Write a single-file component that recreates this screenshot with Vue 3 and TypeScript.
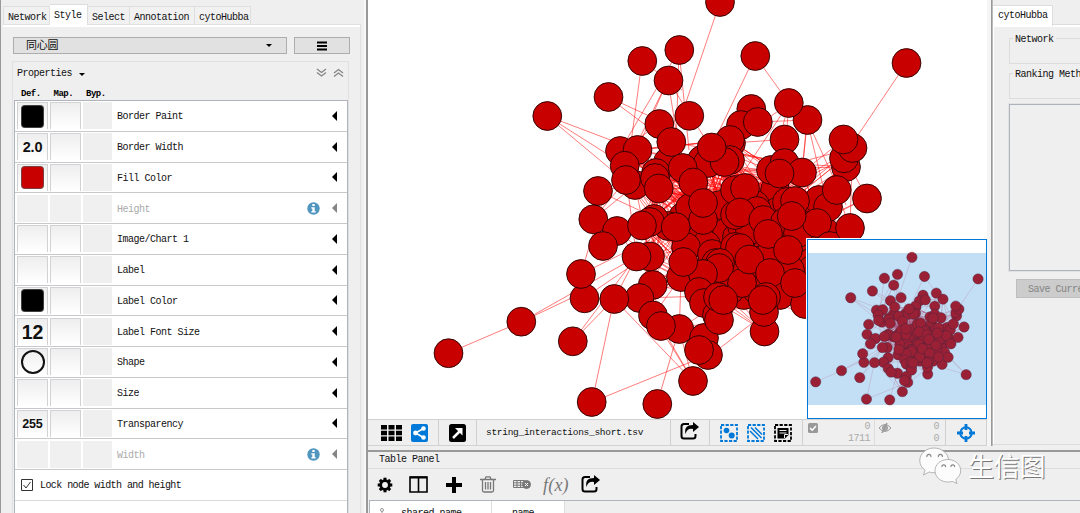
<script setup lang="ts">
interface PropertyRow {
  name: string
  kind: 'swatch' | 'text' | 'ring' | 'blank' | 'disabled'
  value?: string
  size?: number
}

type Point = [number, number]

const tabs = [
  { name: 'Network', cls: 'w47' },
  { name: 'Style', cls: 'w38 active' },
  { name: 'Select', cls: 'w42' },
  { name: 'Annotation', cls: 'w65' },
  { name: 'cytoHubba', cls: 'w56' },
]

const rows: PropertyRow[] = [
  { name: 'Border Paint', kind: 'swatch', value: '#000000' },
  { name: 'Border Width', kind: 'text', value: '2.0', size: 14.5 },
  { name: 'Fill Color', kind: 'swatch', value: '#c80000' },
  { name: 'Height', kind: 'disabled' },
  { name: 'Image/Chart 1', kind: 'blank' },
  { name: 'Label', kind: 'blank' },
  { name: 'Label Color', kind: 'swatch', value: '#000000' },
  { name: 'Label Font Size', kind: 'text', value: '12', size: 19.5 },
  { name: 'Shape', kind: 'ring' },
  { name: 'Size', kind: 'blank' },
  { name: 'Transparency', kind: 'text', value: '255', size: 12.5 },
  { name: 'Width', kind: 'disabled' },
]

// Nodes on the rim of the graph, drawn with explicit links.
const outer: Point[] = [
  [720, 2], [679.3, 50], [642.3, 61], [608.5, 97], [547.3, 116], [755.3, 56],
  [906.5, 63], [867, 198.5], [521.3, 321.7], [448.5, 353.2], [572.8, 341.3],
  [591.7, 402], [657.3, 404], [693, 381], [873, 333],
]

// Densely linked nodes, back to front.
const core: Point[] = [
  [702, 160], [708, 163], [668, 162], [731, 143], [718, 238], [692, 240], [705, 212],
  [683, 217], [690, 208], [745, 205], [727, 232], [737, 237], [760, 240], [775, 190],
  [777, 212], [800, 212], [755, 205], [790, 238], [806, 226], [825, 232], [815, 240],
  [742, 226], [750, 230], [720, 205], [768, 250], [778, 262], [805, 258], [812, 270],
  [766, 277], [762, 260], [744, 295], [780, 295], [757, 290], [805, 304], [822, 284],
  [706, 245], [686, 247], [681, 277], [712, 254], [716, 263], [668, 226], [715, 295],
  [718, 310], [770, 255], [730, 290], [790, 270], [797, 238], [730, 272], [735, 215],
  [751.3, 109], [741, 125], [757.8, 122], [807.5, 120], [788.8, 103], [730, 140],
  [730, 160], [724.5, 162], [784.5, 139.5], [711.7, 147.5], [668.5, 80.5], [689.3, 115.8],
  [659.3, 124], [620, 151], [656, 173], [637.5, 150], [671.3, 142], [624.7, 165.7],
  [635, 185], [626, 180], [655, 178], [658.7, 188.5], [682.7, 168], [598, 191],
  [593.3, 219.3], [617, 231], [603, 246], [584.5, 298.3], [581, 274],
  [654, 219], [650, 222], [642, 225.5], [650, 256.5], [636.5, 256.5], [652.7, 285],
  [639.5, 298], [614.3, 299], [653, 315.5], [679.3, 329], [661, 326],
  [704, 338], [708, 355], [699, 350],
  [703, 220], [693.3, 182.5], [703, 203], [675.7, 227], [735, 190], [745, 188],
  [757, 211], [740, 212.5], [763.3, 220], [735, 247], [740, 248],
  [703, 274], [720, 263], [719, 268], [703, 274], [683.3, 262], [699, 292], [704, 303], [717, 315],
  [742, 283], [749.3, 259.5], [719, 320], [718, 297], [723.3, 300],
  [771, 170], [784.5, 163], [802, 172.5], [779.5, 173.5],
  [846, 167], [844, 158.3], [852.5, 148], [843.5, 139.5],
  [819, 200], [828, 207], [836.7, 190], [787, 202], [795, 201],
  [785, 222], [798, 233], [817, 223], [791.7, 216],
  [768, 234], [788, 250], [770, 273], [795, 283], [764.5, 331.5], [764, 312],
  [766, 297], [762.7, 300], [830, 246], [850, 228],
]

const links: [number, number, number, number][] = [
  [720, 2, 684, 108], [679, 50, 676, 145], [679, 50, 689, 150], [679, 50, 620, 151],
  [642, 61, 626, 180], [642, 61, 682, 90], [608, 97, 671, 126], [608, 97, 671, 144],
  [547, 116, 637, 150], [547, 116, 626, 166], [547, 116, 620, 177],
  [755, 56, 789, 103], [755, 56, 711, 148], [906.5, 63, 852, 144], [867, 198, 846, 159],
  [867, 198, 817, 223], [867, 198, 798, 230], [521, 322, 636, 257], [521, 322, 584, 292],
  [448.5, 353, 521, 322], [573, 341, 636, 257], [573, 341, 614, 299],
  [592, 402, 614, 299], [592, 402, 708, 355], [657, 404, 679, 329], [693, 381, 614, 299],
  [693, 381, 661, 326], [693, 381, 679, 329], [693, 381, 652, 315],
  [711, 355, 764, 314], [764, 331, 722, 305], [764, 331, 718, 290],
  [584, 298, 640, 260], [614, 299, 679, 329], [614, 299, 665, 311], [581, 274, 650, 240],
  [581, 274, 603, 200], [873, 333, 822, 284], [873, 333, 762, 300], [873, 333, 795, 250],
  [668, 80, 626, 166], [668, 80, 682, 168], [668, 80, 637, 150], [668, 80, 711, 148],
  [789, 103, 771, 170], [789, 103, 784, 163], [789, 103, 711, 160], [789, 103, 724, 202],
  [807, 120, 846, 205], [807, 120, 802, 172], [807, 120, 828, 207],
  [843, 155, 740, 212], [846, 167, 720, 170], [852, 148, 763, 220], [598, 191, 675, 227],
]

let seed = 1877
function random(): number {
  seed = (seed * 16807) % 2147483647
  return seed / 2147483647
}

for (let i = 0; i < 1900; i++) {
  const a = core[Math.floor(random() * core.length)]
  const b = core[Math.floor(random() * core.length)]
  const d = Math.hypot(a[0] - b[0], a[1] - b[1])
  const sparse = a[1] < 140 || b[1] < 140 || a[0] < 620 || b[0] < 620 || a[1] > 310 || b[1] > 310
  if (d > 20 && d < (sparse ? 58 : 125)) links.push([a[0], a[1], b[0], b[1]])
}
const edgePath = links.map(([a, b, c, d]) => `M${a} ${b}L${c} ${d}`).join('')
const nodes: Point[] = [...outer, ...core]
const gearTeeth = [0, 45, 90, 135, 180, 225, 270, 315]
</script>

<template>
  <div class="desktop">
    <aside class="control">
      <nav class="tabs">
        <div v-for="t in tabs" :key="t.name" class="tab" :class="t.cls">{{ t.name }}</div>
      </nav>
      <div class="control-body">
        <div class="style-bar">
          <div class="combo"><span>同心圆</span><i class="down"></i></div>
          <div class="menu-btn"><svg width="10" height="10"><path d="M0 1.5h10M0 5h10M0 8.5h10" stroke="#000" stroke-width="2" /></svg></div>
        </div>
        <section class="properties">
          <div class="prop-title">
            <span>Properties</span><i class="down"></i>
            <svg class="chevs" width="28" height="10" fill="none" stroke="#858585" stroke-width="1.3">
              <path d="M1 1l4.500 3.500L10 1M1 4.500l4.500 3.500L10 4.500M18 5l4.500-3.500L27 5M18 8.500l4.500-3.500L27 8.500" />
            </svg>
          </div>
          <div class="prop-head"><b>Def.</b><b>Map.</b><b>Byp.</b></div>
          <div class="prop-list">
            <div v-for="r in rows" :key="r.name" class="prop" :class="{ off: r.kind === 'disabled' }">
              <div class="cell">
                <i v-if="r.kind === 'swatch'" class="swatch" :style="{ background: r.value }"></i>
                <b v-else-if="r.kind === 'text'" :style="{ fontSize: r.size + 'px' }">{{ r.value }}</b>
                <i v-else-if="r.kind === 'ring'" class="ring"></i>
              </div>
              <div class="cell"></div>
              <div class="cell flat"></div>
              <span class="prop-name">{{ r.name }}</span>
              <svg v-if="r.kind === 'disabled'" class="info" width="13" height="13" viewBox="0 0 13 13">
                <circle cx="6.500" cy="6.500" r="6.200" fill="#5096be" />
                <path d="M5.300 2h2.400v2H5.300zM4.300 5.200h3.400v4h1v1.300H4.300V9.200h1V6.500h-1z" fill="#fff" />
              </svg>
              <svg width="5" height="10"><path d="M5 0v10L0 5z" :fill="r.kind === 'disabled' ? '#858585' : '#000'" /></svg>
            </div>
            <div class="lock">
              <svg width="12" height="12" fill="none" stroke="#333"><path d="M.5.5h11v11H.5z" /><path d="M2.500 6l2.500 3 4.500-6" /></svg>
              <span>Lock node width and height</span>
            </div>
          </div>
        </section>
      </div>
    </aside>

    <div class="work">
      <div class="upper">
        <main class="network">
          <div class="canvas">
            <svg class="graph" width="618" height="419" viewBox="369 0 618 419">
              <path :d="edgePath" fill="none" stroke="#ff0000" stroke-opacity=".65" stroke-width=".8" />
              <circle v-for="(n, i) in nodes" :key="i" :cx="n[0]" :cy="n[1]" r="14.4" fill="#c80000" stroke="#260000" stroke-width=".9" />
            </svg>
            <div class="birdseye">
              <svg width="178" height="178" viewBox="808 240 178 178">
                <g transform="translate(656.7 256.600) scale(.3545)">
                  <path :d="edgePath" fill="none" stroke="#d52038" stroke-opacity=".32" stroke-width="1.5" />
                  <circle v-for="(n, i) in nodes" :key="i" :cx="n[0]" :cy="n[1]" r="14.6" fill="#c80000" stroke="#400008" stroke-width="1" />
                </g>
                <rect x="808" y="253" width="178" height="152" fill="#0f7fd7" fill-opacity=".25" />
              </svg>
            </div>
          </div>
          <div class="net-bar">
            <div class="seg views">
              <svg width="21" height="16" viewBox="0 0 21 16"><path d="M0 0h6v4.500H0zM7.500 0h6v4.500h-6zM15 0h6v4.500h-6zM0 5.700h6v4.500H0zM7.500 5.700h6v4.500h-6zM15 5.700h6v4.500h-6zM0 11.400h6v4.500H0zM7.500 11.400h6v4.500h-6zM15 11.400h6v4.500h-6z" /></svg>
              <svg width="17" height="18" viewBox="0 0 17 18"><rect width="17" height="18" rx="2" fill="#0078d7" /><path d="M12.500 4.500L4.500 9l8 4.500" fill="none" stroke="#fff" stroke-width="1.500" /><g fill="#fff"><circle cx="12.500" cy="4.500" r="2.300" /><circle cx="4.500" cy="9" r="2.400" /><circle cx="12.500" cy="13.500" r="2.300" /></g></svg>
            </div>
            <div class="seg detach"><svg width="17" height="18" viewBox="0 0 17 18"><rect width="17" height="18" rx="2.500" /><path d="M4 14l7-7" stroke="#fff" stroke-width="2.500" /><path d="M6 4h7.500v7.500z" fill="#fff" /></svg></div>
            <div class="seg title">string_interactions_short.tsv</div>
            <div class="seg export"><svg width="20" height="18" viewBox="0 0 20 18"><path d="M9 2H4Q1.500 2 1.500 4.500v9.500q0 2.500 2.500 2.500h9q2.500 0 2.500-2.500v-2" fill="none" stroke="#000" stroke-width="2" /><path d="M13 0l6 5-6 5V7Q7 6 5.500 12 3.500 3 13 3z" /></svg></div>
            <div class="seg select">
              <svg width="18" height="18" viewBox="0 0 18 18"><rect x="1" y="1" width="16" height="16" fill="none" stroke="#0078d7" stroke-width="1.800" stroke-dasharray="3.200 1.400" /><circle cx="6.500" cy="6.500" r="2.800" fill="#0078d7" /><circle cx="11.700" cy="11.500" r="3" fill="#0078d7" /></svg>
              <svg width="18" height="18" viewBox="0 0 18 18"><rect x="1" y="1" width="16" height="16" fill="none" stroke="#0078d7" stroke-width="1.800" stroke-dasharray="3.200 1.400" /><path d="M3 7l8 8M4 3.500L14.500 14M8 3.500l7 7" stroke="#0078d7" stroke-width="1.500" /></svg>
              <svg width="18" height="18" viewBox="0 0 18 18"><rect x="1" y="1" width="16" height="16" fill="none" stroke="#000" stroke-width="1.800" stroke-dasharray="3.200 1.400" /><path d="M3.500 4h11v7l-3.500 3.500H3.500z" /><path d="M5.500 6.500h7M5.500 9h7M10.500 14v-3.500H14" stroke="#eee" fill="none" /></svg>
            </div>
            <div class="seg counts">
              <div class="count"><svg width="10" height="10"><rect width="10" height="10" rx="1.500" fill="#999" /><path d="M2 5l2.200 2.200L8 3" fill="none" stroke="#fff" stroke-width="1.500" /></svg><p>0<br>1711</p></div>
              <div class="count hidden"><svg width="14" height="10" viewBox="0 0 14 10" fill="none" stroke="#999"><path d="M1 5Q7-2 13 5 7 12 1 5z" /><circle cx="7" cy="5" r="2.500" fill="#aaa" /><path d="M4 10l5-10" stroke-width="1.500" /></svg><p>0<br>0</p></div>
            </div>
            <div class="seg target"><svg width="18" height="18" viewBox="0 0 18 18"><circle cx="9" cy="9" r="5.700" fill="none" stroke="#0078d7" stroke-width="2" /><path d="M9 0v6M9 12v6M0 9h6M12 9h6" stroke="#0078d7" stroke-width="2.800" /></svg></div>
          </div>
        </main>

        <aside class="results">
          <div class="tabs"><div class="tab active w60">cytoHubba</div></div>
          <div class="results-body">
            <fieldset><legend>Network</legend></fieldset>
            <fieldset><legend>Ranking Methods</legend></fieldset>
            <div class="result-box"></div>
            <div class="save">Save Current</div>
          </div>
        </aside>
      </div>

      <section class="table-panel">
        <div class="table-title">Table Panel</div>
        <div class="table-tools">
          <svg width="16" height="16" viewBox="-8 -8 16 16"><circle r="4.300" fill="none" stroke="#000" stroke-width="2.800" /><rect v-for="a in gearTeeth" :key="a" x="-1.500" y="-7.300" width="3" height="3" :transform="`rotate(${a})`" /></svg>
          <svg class="t-cols" width="19" height="17"><path d="M1 1h17v15H1zM9.500 1v15" fill="none" stroke="#000" stroke-width="1.600" /><path d="M1 1.500h17" stroke="#000" stroke-width="2" /></svg>
          <svg class="t-plus" width="16" height="16"><path d="M8 0v16M0 8h16" stroke="#000" stroke-width="4" /></svg>
          <svg class="t-trash" width="16" height="17" fill="none" stroke="#777" stroke-width="1.300"><path d="M0 3.500h16M5 3L6 .8h4L11 3M2.500 4v10.500q0 1.500 1.500 1.500h8q1.500 0 1.500-1.500V4M5.500 6v7.500M8 6v7.500M10.500 6v7.500" /></svg>
          <svg class="t-del" width="18" height="11" fill="none" stroke="#777"><path d="M.5 1.500h11v7H.5zM.5 3.800h11M.5 6.200h11M4 1.500v7M7.500 1.500v7" /><circle cx="13.500" cy="5.500" r="4" fill="#777" /><path d="M12 4l3 3M15 4l-3 3" stroke="#fff" /></svg>
          <span class="fx">f(x)</span>
          <svg class="t-export" width="20" height="18" viewBox="0 0 20 18"><path d="M9 2H4Q1.500 2 1.500 4.500v9.500q0 2.500 2.500 2.500h9q2.500 0 2.500-2.500v-2" fill="none" stroke="#000" stroke-width="2" /><path d="M13 0l6 5-6 5V7Q7 6 5.500 12 3.500 3 13 3z" /></svg>
        </div>
        <div class="table-head">
          <div class="th shared"><svg width="10" height="11" stroke="#999" fill="none"><circle cx="5" cy="2" r="1.500" /><path d="M5 3v7M0 5.500h10" /></svg><span>shared name</span></div>
          <div class="th"><span>name</span></div>
        </div>
      </section>
    </div>

    <div class="watermark">
      <svg width="43" height="37" viewBox="0 0 43 37">
        <g fill="#fcfcfc" stroke="#999" stroke-width=".7">
          <path d="M15 1C7 1 .8 6.500.8 13.500c0 4 2 7.500 5.300 9.700L4.500 28l5.600-3c1.600.5 3.200.7 4.900.7 8 0 14.500-5.500 14.500-12.300S23 1 15 1z" />
          <path d="M29 12.500c-7.500 0-13 5-13 11.200S21.500 35 29 35c1.500 0 3-.2 4.300-.6L38 36.500l-1.300-4c3.200-2.200 5-5.300 5-8.800 0-6.200-5.500-11.200-12.700-11.200z" />
        </g>
        <g fill="none" stroke="#858585" stroke-width="1.200"><path d="M8 10a2 2 0 1 1 3.800 0M19.500 10a2 2 0 1 1 3.800 0M23 20a1.800 1.800 0 1 1 3.500 0M32 20a1.800 1.800 0 1 1 3.500 0" /></g>
      </svg>
      <span>生信图</span>
    </div>
  </div>
</template>

<style>
html, body { margin: 0; background: #efefef; overflow: hidden; }
</style>

<style scoped>
* { box-sizing: border-box; }
svg { display: block; flex: none; }
.desktop { position: relative; display: flex; width: 1080px; height: 513px; overflow: hidden; background: #efefef; color: #111; font: 10px/12px "Liberation Mono", "Noto Sans CJK SC", monospace; letter-spacing: -.5px; white-space: nowrap; }
.control { width: 368px; height: 513px; border-left: 1px solid #999; border-right: 2px solid #999; padding: 4px 4px 0 2px; box-shadow: inset -2px 0 #f8f8f8; }
.tabs { display: flex; align-items: flex-end; height: 20px; }
.tab { height: 18px; border: 1px solid #dedede; border-width: 1px 1px 0 0; padding: 5px 0 0 4px; background: #f1f1f1; }
.tab.active { height: 21px; padding-top: 5px; background: #fff; z-index: 1; align-self: flex-start; }
.w47 { width: 47px; border-left-width: 1px; }
.w38 { width: 38px; }
.w42 { width: 42px; }
.w65 { width: 65px; }
.w56 { width: 56px; }
.w60 { width: 60px; }
.control-body { width: 358px; height: 489px; border: 1px solid #e0e0e0; border-width: 1px 1px 0 0; box-shadow: inset 0 2px #fff; padding: 12px 0 0 10px; }
.style-bar { display: flex; gap: 7px; height: 17px; }
.combo, .menu-btn { display: flex; align-items: center; background: #e1e1e1; border: 1px solid #adadad; }
.combo { width: 274px; justify-content: space-between; padding: 0 14px 0 12px; font-size: 11px; letter-spacing: -.2px; }
.menu-btn { width: 56px; justify-content: center; }
.down { width: 0; height: 0; border: 3px solid transparent; border-top: 3px solid #000; border-bottom: 0; }
.properties { width: 337px; height: 452px; margin: 7px 0 0 -1px; border: 1px solid #e0e0e0; border-bottom: 0; }
.prop-title { display: flex; align-items: center; gap: 7px; height: 24px; padding: 0 4px; }
.chevs { margin-left: auto; margin-top: -3px; }
.prop-head { display: flex; height: 14px; padding: 2px 0 0 8px; font-size: 9px; letter-spacing: -.5px; color: #000; }
.prop-head b { width: 32.500px; }
.prop-list { height: 414px; margin: 0 0 0 1px; width: 334px; border: 1px solid #aeb3bd; border-bottom: 0; background: #fff; }
.prop { display: flex; align-items: center; height: 30.750px; padding: 0 10px 0 2px; border-bottom: 1px solid #c8c8cc; }
.cell { width: 31px; height: 27px; margin-right: 2px; border: 1px solid #d2d2d4; border-bottom: 0; background: linear-gradient(#eee, #fff); display: flex; align-items: center; justify-content: center; font-family: "Liberation Sans", sans-serif; letter-spacing: -.2px; color: #111; }
.cell.flat { width: 29px; margin: 0; background: #efefef; border: 0; }
.off .cell { background: #f0f0f0; border: 0; }
.swatch { width: 23px; height: 23px; border: 1px solid rgba(90,90,90,.7); border-radius: 4px; }
.ring { width: 24px; height: 24px; border: 2px solid #111; border-radius: 50%; }
.prop-name { flex: 1; margin: 3px 0 0 5px; }
.info { margin-right: 12px; }
.off .prop-name { color: #aaa; }
.lock { display: flex; align-items: center; gap: 7px; height: 30.500px; padding: 1px 6px 0; border-bottom: 1px solid #dadadd; }
.lock span { margin-top: 2px; letter-spacing: -.57px; }
.work { width: 712px; height: 513px; }
.upper { display: flex; height: 446px; }
.network { width: 623px; border-right: 4px solid #f5f5f5; box-shadow: 1px 0 #999, 2px 0 #bbb; }
.canvas { position: relative; height: 419px; padding-left: 1px; background: #fff; }
.birdseye { position: absolute; left: 439px; top: 239px; width: 180px; height: 180px; border: 1px solid #0078d7; background: #fff; box-shadow: -1px -1px #fff; }
.net-bar { display: flex; height: 27px; border: 1px solid #d2d2d2; border-width: 1px 0; }
.seg { display: flex; align-items: center; height: 25px; border-right: 1px solid #d0d0d0; }
.views { width: 71px; gap: 9px; padding-left: 13px; }
.detach { width: 38px; justify-content: center; }
.title { width: 194px; padding-left: 9px; font-size: 9.500px; letter-spacing: -.28px; padding-top: 1px; }
.export { width: 39px; justify-content: center; }
.export svg { margin-top: -3px; }
.select { width: 93px; justify-content: center; gap: 9px; }
.counts { width: 143px; color: #aaa; }
.count { display: flex; justify-content: space-between; align-items: flex-start; width: 67px; height: 25px; padding: 3px 0 0 5px; }
.count p { margin: -2px 0 0; text-align: right; }
.count.hidden { margin-left: 4px; padding-left: 3px; width: 65px; border-left: 1px solid #ddd; }
.target { width: 41px; justify-content: center; }
.results { flex: 1; height: 445px; margin-left: 2px; padding-top: 5px; overflow: hidden; border-bottom: 1px solid #ddd; }
.results .tabs { height: 19px; }
.results-body { border-top: 1px solid #ddd; box-shadow: inset 0 2px #fff; height: 420px; padding: 12px 0 0 15px; border-left: 1px solid #fff; }
.results .tab { padding: 4px 0 0 5px; }
fieldset { width: 180px; height: 27px; margin: 0 0 8px; padding: 0; border: 1px solid #dcdcdc; }
legend { margin-left: 3px; padding: 0 2px; height: 2px; line-height: 5px; color: #111; }
.result-box { width: 180px; height: 167px; border: 1px solid #aeb3bd; box-shadow: 0 0 0 1px #e2e2e2; margin-top: -3px; }
.save { width: 120px; height: 19px; margin: 8px 0 0 7px; border: 1px solid #bfbfbf; background: #ccc; color: #848484; padding: 4px 11px; }
.table-panel { height: 67px; margin-top: 4px; border-top: 2px solid #999; }
.table-title { height: 17px; padding: 2px 0 0 11px; border-bottom: 1px solid #ddd; }
.table-tools { display: flex; align-items: center; height: 31px; padding-left: 9px; }
.t-cols { margin-left: 16px; }
.t-plus { margin-left: 18px; }
.t-trash { margin-left: 18px; }
.t-del { margin-left: 17px; }
.fx { width: 28px; margin-left: 12px; color: #777; font: italic 18px/20px "Liberation Serif", serif; letter-spacing: .2px; }
.t-export { margin-left: 10px; margin-top: -2px; }
.table-head { display: flex; height: 20px; margin-left: 1px; border-top: 1px solid #aeb3bd; border-left: 1px solid #aeb3bd; }
.th { display: flex; width: 73px; padding: 7px 0 0 20px; background: #fff; border-right: 1px solid #ddd; }
.th.shared { width: 122px; padding-left: 7px; gap: 14px; }
.watermark { position: absolute; left: 919px; top: 447px; display: flex; gap: 6px; font: 400 26px/35px "Noto Sans CJK SC", sans-serif; letter-spacing: -.3px; color: #fff; text-shadow: 1px 1px 0 #777; }
</style>
